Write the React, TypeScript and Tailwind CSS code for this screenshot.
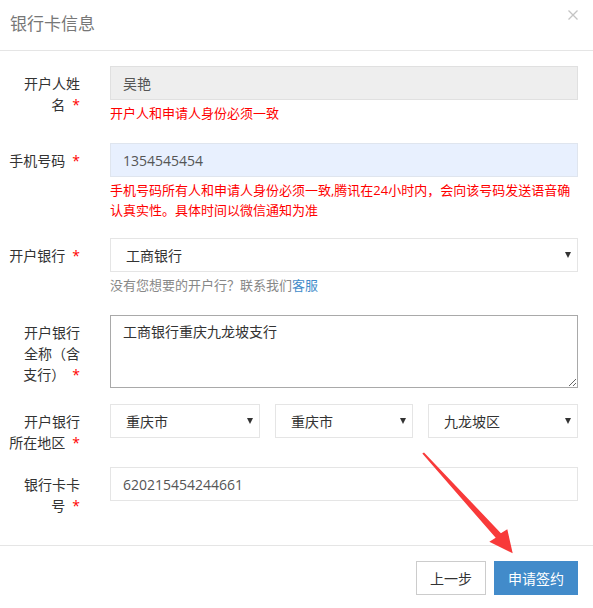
import type { ReactNode } from "react";

function Field({
  label,
  children,
  className = "",
}: {
  label: string[];
  children: ReactNode;
  className?: string;
}) {
  return (
    <div className={`flex ${className}`}>
      <label className="w-[80px] shrink-0 pt-[7px] text-right text-[14px] leading-[21px] text-[#333]">
        {label.map((line, i) => (
          <span key={i} className="block whitespace-nowrap">
            {line}
            {i === label.length - 1 && <span className="ml-[7px] text-[#f00]">*</span>}
          </span>
        ))}
      </label>
      <div className="ml-[30px] min-w-0 flex-1">{children}</div>
    </div>
  );
}

function Select({ value }: { value: string }) {
  return (
    <div className="relative">
      <select
        defaultValue={value}
        className="block h-[34px] w-full appearance-none border border-[#e5e5e5] bg-white pl-[15px] text-[14px] text-[#333] outline-none"
      >
        <option>{value}</option>
      </select>
      <svg
        className="pointer-events-none absolute right-[7px] top-[14px]"
        width="6"
        height="6"
        viewBox="0 0 6 6"
      >
        <polygon points="0,0 6,0 3,6" fill="#333" />
      </svg>
    </div>
  );
}

export default function App() {
  return (
    <div className="relative w-[593px] bg-white font-['Open_Sans','Noto_Sans_CJK_SC',sans-serif]">
      <div className="flex h-[51px] items-start justify-between border-b border-[#e5e5e5]">
        <h4 className="pl-[10px] pt-[13px] text-[17px] leading-[21px] text-[#777]">
          银行卡信息
        </h4>
        <button className="mr-[15px] mt-[10px]">
          <svg width="10" height="10" viewBox="0 0 10 10">
            <path d="M0.5 0.5 9.5 9.5M9.5 0.5 0.5 9.5" stroke="#c4c4c4" strokeWidth="1.3" />
          </svg>
        </button>
      </div>

      <div className="pb-[29px] pr-[15px] pt-[15px]">
        <Field label={["开户人姓", "名"]} className="mb-[20px]">
          <input
            readOnly
            defaultValue="吴艳"
            className="block h-[34px] w-full border border-[#e0e0e0] bg-[#eee] px-[12px] text-[14px] text-[#555] outline-none"
          />
          <p className="mt-[3px] text-[13px] leading-[20px] text-[#f00]">
            开户人和申请人身份必须一致
          </p>
        </Field>

        <Field label={["手机号码"]} className="mb-[18px]">
          <input
            defaultValue="1354545454"
            className="block h-[34px] w-full border border-[#dfe5ee] bg-[#e8f0fe] px-[12px] text-[14px] text-[#555] outline-none"
          />
          <p className="mt-[3px] text-[13px] leading-[20px] text-[#f00]">
            手机号码所有人和申请人身份必须一致,腾讯在24小时内，会向该号码发送语音确认真实性。具体时间以微信通知为准
          </p>
        </Field>

        <Field label={["开户银行"]} className="mb-[20px]">
          <Select value="工商银行" />
          <p className="mt-[3px] text-[13px] leading-[20px] text-[#888]">
            没有您想要的开户行？联系我们<span className="text-[#428bca]">客服</span>
          </p>
        </Field>

        <Field label={["开户银行", "全称（含", "支行）"]} className="mb-[16px]">
          <textarea
            defaultValue="工商银行重庆九龙坡支行"
            className="block h-[73px] w-full border border-[#a9a9a9] px-[12px] py-[6px] text-[14px] leading-[20px] text-[#333] outline-none"
          />
        </Field>

        <Field label={["开户银行", "所在地区"]} className="mb-[14px]">
          <div className="grid grid-cols-[150px_1fr_150px] gap-x-[15px]">
            <Select value="重庆市" />
            <Select value="重庆市" />
            <Select value="九龙坡区" />
          </div>
        </Field>

        <Field label={["银行卡卡", "号"]}>
          <input
            defaultValue="620215454244661"
            className="block h-[34px] w-full border border-[#e5e5e5] bg-white px-[12px] text-[14px] text-[#555] outline-none"
          />
        </Field>
      </div>

      <div className="flex justify-end gap-[8px] border-t border-[#e5e5e5] pb-[13px] pr-[15px] pt-[15px]">
        <button className="h-[34px] w-[70px] border border-[#ccc] bg-white text-[14px] text-[#333]">
          上一步
        </button>
        <button className="h-[34px] w-[84px] bg-[#428bca] text-[14px] text-white">
          申请签约
        </button>
      </div>

      {/* annotation arrow drawn over the dialog */}
      <svg
        className="pointer-events-none absolute inset-0"
        width="593"
        height="608"
        viewBox="0 0 593 608"
      >
        <polygon
          points="422.3,453.6 424,452.4 500.9,533.2 507.3,529.3 512.7,553.3 489.3,541.7 495.7,537.8"
          fill="#f83a3a"
        />
      </svg>
    </div>
  );
}
